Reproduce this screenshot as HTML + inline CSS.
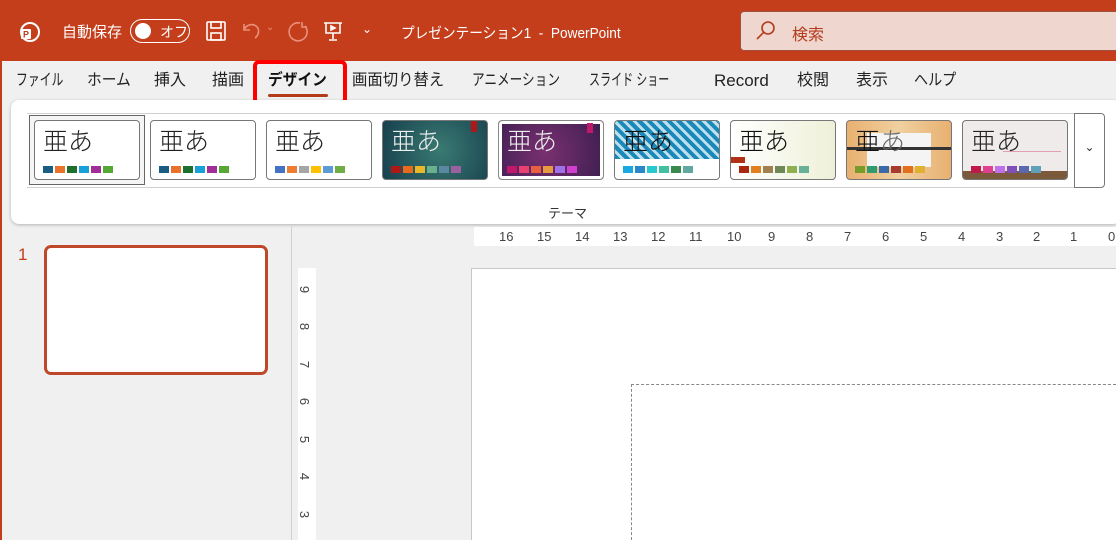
<!DOCTYPE html>
<html style="overflow:hidden;width:1116px;height:540px"><head><meta charset="utf-8"><style>
*{margin:0;padding:0;box-sizing:border-box}
body{width:1116px;height:540px;overflow:hidden;background:#f0f0f0;font-family:"Liberation Sans","Noto Sans CJK JP",sans-serif;position:relative}
.a{position:absolute}
.title{left:0;top:0;width:1116px;height:61px;background:#c43e1c;color:#fff}
.tabs span{position:absolute;top:70px;font-size:16px;line-height:22px;color:#222;white-space:nowrap;transform-origin:left center}
.tile{position:absolute;top:120px;width:106px;height:60px;border:1px solid #777;border-radius:4px;overflow:hidden;background:#fff}
.tile .t{position:absolute;left:8px;top:2px;font-size:25px;color:#222;font-family:"Noto Sans CJK JP",sans-serif;font-weight:300;line-height:34px}
.sw{position:absolute;left:8px;top:45px;display:flex;gap:2px}
.sw i{display:block;width:10px;height:7px}
.rn{position:absolute;top:229px;font-size:13px;color:#444}
.vn{position:absolute;left:301px;font-size:13px;color:#444;transform:rotate(90deg)}
</style></head><body>
<div class="a" style="left:0;top:0;width:2px;height:540px;background:#c43e1c"></div>
<div class="a title">
 <svg class="a" style="left:18px;top:20px" width="24" height="24" viewBox="0 0 24 24"><circle cx="12" cy="12" r="9" fill="none" stroke="#fff" stroke-width="2"/><rect x="3" y="9" width="10" height="10" rx="1" fill="#fff"/><text x="5" y="17.5" font-size="9" fill="#c43e1c" font-weight="bold">P</text></svg>
 <div class="a" style="left:62px;top:21px;font-size:15px">自動保存</div>
 <div class="a" style="left:130px;top:19px;width:60px;height:24px;border:1.5px solid #fff;border-radius:12px"></div>
 <div class="a" style="left:135px;top:23px;width:16px;height:16px;border-radius:8px;background:#fff"></div>
 <div class="a" style="left:160px;top:22px;font-size:14px">オフ</div>
 <svg class="a" style="left:205px;top:20px" width="22" height="22" viewBox="0 0 22 22" fill="none" stroke="#fff" stroke-width="1.6"><rect x="2" y="2" width="18" height="18" rx="1"/><rect x="6" y="2" width="10" height="6"/><rect x="6" y="13" width="10" height="7"/></svg>
 <svg class="a" style="left:240px;top:20px" width="24" height="22" viewBox="0 0 24 22" fill="none" stroke="#e8917a" stroke-width="1.6"><path d="M4 4v6h6M4 10c2-5 8-7 12-4 4 3 3 9-1 12"/></svg>
 <div class="a" style="left:266px;top:22px;font-size:10px;color:#e8917a">⌄</div>
 <svg class="a" style="left:287px;top:19px" width="24" height="24" viewBox="0 0 24 24" fill="none" stroke="#e8917a" stroke-width="1.6"><path d="M15 3v5h5M18 7a9 9 0 1 1-5-3"/></svg>
 <svg class="a" style="left:322px;top:20px" width="22" height="22" viewBox="0 0 22 22" fill="none" stroke="#fff" stroke-width="1.6"><path d="M2 3h18M4 3v10h14V3M11 13v6M7 20h8"/><path d="M9 6l4 2-4 2z" fill="#fff"/></svg>
 <div class="a" style="left:362px;top:22px;font-size:12px">⌄</div>
 <div class="a" style="left:401px;top:22px;font-size:15px;white-space:nowrap;transform:scaleX(.91);transform-origin:left">プレゼンテーション1 &nbsp;- &nbsp;PowerPoint</div>
 <div class="a" style="left:740px;top:11px;width:380px;height:40px;background:#efd7d0;border:1px solid #a05040;border-radius:4px"></div>
 <svg class="a" style="left:755px;top:20px" width="22" height="22" viewBox="0 0 22 22" fill="none" stroke="#b43a1c" stroke-width="1.6"><circle cx="13" cy="8" r="6"/><path d="M9 12L2 19"/></svg>
 <div class="a" style="left:792px;top:21px;font-size:16px;color:#b43a1c">検索</div>
</div>
<div class="tabs">
 <span style="left:16px;transform:scaleX(.74)">ファイル</span><span style="left:87px;transform:scaleX(.92)">ホーム</span><span style="left:154px">挿入</span><span style="left:212px">描画</span>
 <span style="left:268px;font-weight:bold;color:#111;transform:scaleX(.92)">デザイン</span>
 <span style="left:352px;transform:scaleX(.96)">画面切り替え</span><span style="left:472px;transform:scaleX(.79)">アニメーション</span><span style="left:589px;transform:scaleX(.69)">スライド ショー</span><span style="left:714px;font-size:17px">Record</span><span style="left:797px">校閲</span><span style="left:856px">表示</span><span style="left:914px;transform:scaleX(.88)">ヘルプ</span>
</div>
<div class="a" style="left:253px;top:60px;width:94px;height:45px;border:4px solid #f00;border-radius:6px"></div>
<div class="a" style="left:268px;top:94px;width:60px;height:3px;background:#b43a1c;border-radius:2px"></div>
<div class="a" style="left:11px;top:100px;width:1110px;height:124px;background:#fff;border-radius:8px;box-shadow:0 1px 3px rgba(0,0,0,.25)"></div>
<div class="a" style="left:27px;top:113px;width:1050px;height:1px;background:#d0d0d0"></div>
<div class="a" style="left:27px;top:187px;width:1050px;height:1px;background:#d0d0d0"></div>
<div class="a" style="left:29px;top:115px;width:116px;height:70px;border:1px solid #666;background:#f5f5f5"></div>
<div class="tile" style="left:34px"><div class="t">亜あ</div><div class="sw"><i style="background:#1a5d82"></i><i style="background:#e8722c"></i><i style="background:#1e6e2e"></i><i style="background:#1aa0d8"></i><i style="background:#a12e98"></i><i style="background:#56a834"></i></div></div>
<div class="tile" style="left:150px"><div class="t">亜あ</div><div class="sw"><i style="background:#1a5d82"></i><i style="background:#e8722c"></i><i style="background:#1e6e2e"></i><i style="background:#1aa0d8"></i><i style="background:#a12e98"></i><i style="background:#56a834"></i></div></div>
<div class="tile" style="left:266px"><div class="t">亜あ</div><div class="sw"><i style="background:#4472c4"></i><i style="background:#ed7d31"></i><i style="background:#a5a5a5"></i><i style="background:#ffc000"></i><i style="background:#5b9bd5"></i><i style="background:#70ad47"></i></div></div>
<div class="tile" style="left:382px;background:radial-gradient(circle at 55% 50%,#3a7a72,#17404e)"><div class="t" style="color:#eee">亜あ</div><div style="position:absolute;right:10px;top:0;width:6px;height:11px;background:#b01818"></div><div class="sw"><i style="background:#b01818"></i><i style="background:#e86a1a"></i><i style="background:#e8b82a"></i><i style="background:#6ab08e"></i><i style="background:#5a88a0"></i><i style="background:#9a60a0"></i></div></div>
<div class="tile" style="left:498px;background:radial-gradient(circle at 45% 55%,#7a3070,#3a1e50);border-color:#888;box-shadow:inset 0 0 0 3px #fff"><div class="t" style="color:#eee">亜あ</div><div style="position:absolute;right:10px;top:2px;width:6px;height:10px;background:#c0186a"></div><div class="sw"><i style="background:#c0186a"></i><i style="background:#e84070"></i><i style="background:#e86040"></i><i style="background:#e89a40"></i><i style="background:#a070e8"></i><i style="background:#d040d0"></i></div></div>
<div class="tile" style="left:614px"><div style="position:absolute;left:0;top:0;width:106px;height:38px;background:repeating-linear-gradient(45deg,#1a88b8 0 4px,#bde0ee 4px 7px),#1a88b8"></div><div class="t" style="color:#111">亜あ</div><div class="sw"><i style="background:#1aa8e0"></i><i style="background:#2a88c8"></i><i style="background:#28c8d0"></i><i style="background:#40c0a0"></i><i style="background:#3a8a50"></i><i style="background:#60a8a0"></i></div></div>
<div class="tile" style="left:730px;background:linear-gradient(90deg,#fff,#eef0d8)"><div class="t" style="color:#111">亜あ</div><div style="position:absolute;left:0;top:36px;width:14px;height:6px;background:#b03018"></div><div class="sw"><i style="background:#a82810"></i><i style="background:#e08020"></i><i style="background:#a08050"></i><i style="background:#708858"></i><i style="background:#90b050"></i><i style="background:#68b098"></i></div></div>
<div class="tile" style="left:846px;background:linear-gradient(90deg,#e8b070,#f0d0a0,#e8b070)"><div style="position:absolute;left:20px;top:12px;width:64px;height:34px;background:#f4f4f4"></div><div style="position:absolute;left:0;top:26px;width:106px;height:3px;background:#333"></div><div class="t" style="color:#111">亜<span style="color:#666">あ</span></div><div class="sw"><i style="background:#7a9a28"></i><i style="background:#309a70"></i><i style="background:#3a6aa8"></i><i style="background:#a83a30"></i><i style="background:#e07020"></i><i style="background:#e0b030"></i></div></div>
<div class="tile" style="left:962px;background:#eeebea"><div style="position:absolute;left:0;bottom:0;width:106px;height:8px;background:#7a5a3a"></div><div style="position:absolute;left:40px;top:30px;width:58px;height:1px;background:#e0a0b0"></div><div class="t" style="color:#222">亜あ</div><div class="sw"><i style="background:#c01848"></i><i style="background:#e04090"></i><i style="background:#c070e8"></i><i style="background:#8050b8"></i><i style="background:#5a68b0"></i><i style="background:#60a0b8"></i></div></div>
<div class="a" style="left:1074px;top:113px;width:31px;height:75px;border:1px solid #777;border-radius:0 4px 4px 0;background:#fff;text-align:center;padding-top:26px;font-size:12px;color:#333">⌄</div>
<div class="a" style="left:548px;top:203px;font-size:13px;color:#333">テーマ</div>
<div class="a" style="left:291px;top:226px;width:1px;height:314px;background:#d0d0d0"></div>
<div class="a" style="left:18px;top:245px;font-size:17px;color:#c43e1c">1</div>
<div class="a" style="left:44px;top:245px;width:224px;height:130px;border:3px solid #c0482a;border-radius:7px;background:#fff"></div>
<div class="a" style="left:474px;top:227px;width:650px;height:19px;background:#fff"></div>
<div class="rn" style="left:499px">16</div><div class="rn" style="left:537px">15</div><div class="rn" style="left:575px">14</div><div class="rn" style="left:613px">13</div><div class="rn" style="left:651px">12</div><div class="rn" style="left:689px">11</div><div class="rn" style="left:727px">10</div><div class="rn" style="left:768px">9</div><div class="rn" style="left:806px">8</div><div class="rn" style="left:844px">7</div><div class="rn" style="left:882px">6</div><div class="rn" style="left:920px">5</div><div class="rn" style="left:958px">4</div><div class="rn" style="left:996px">3</div><div class="rn" style="left:1033px">2</div><div class="rn" style="left:1070px">1</div><div class="rn" style="left:1108px">0</div>
<div class="a" style="left:298px;top:268px;width:18px;height:272px;background:#fff"></div>
<div class="vn" style="top:282px">9</div><div class="vn" style="top:319px">8</div><div class="vn" style="top:357px">7</div><div class="vn" style="top:394px">6</div><div class="vn" style="top:432px">5</div><div class="vn" style="top:469px">4</div><div class="vn" style="top:507px">3</div>
<div class="a" style="left:471px;top:268px;width:645px;height:272px;background:#fff;border:1px solid #c8c8c8;border-right:none;border-bottom:none"></div>
<div class="a" style="left:631px;top:384px;width:485px;height:156px;border:1px dashed #888;border-right:none;border-bottom:none"></div>
</body></html>
